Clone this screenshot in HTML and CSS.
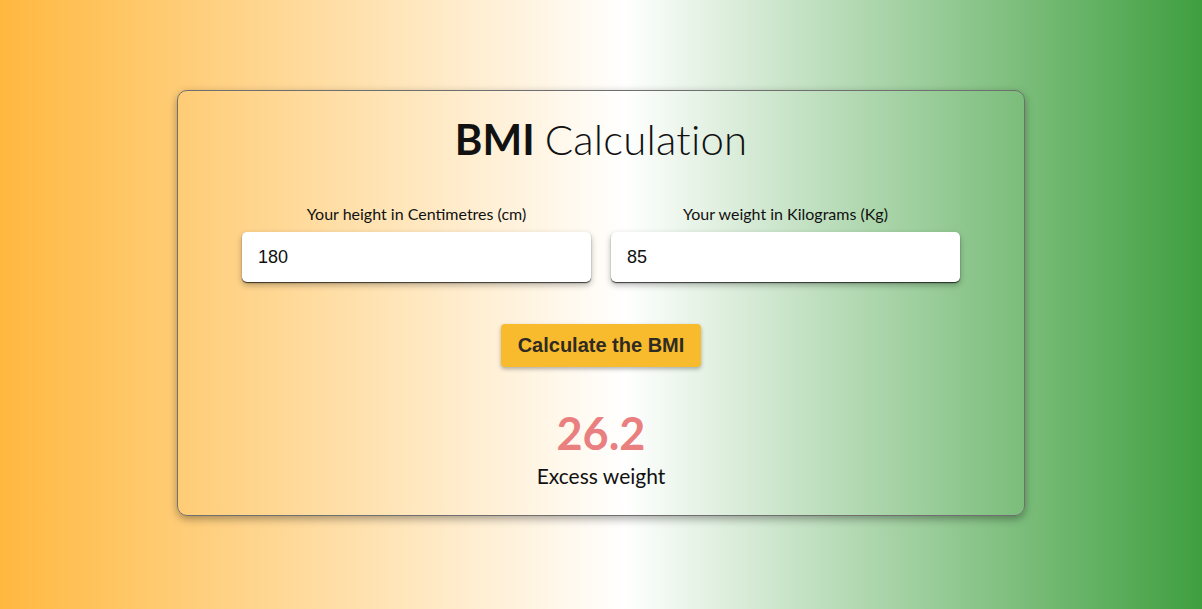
FILE: index.html
```html
<!DOCTYPE html>
<html lang="en">
<head>
<meta charset="utf-8">
<title>BMI Calculation</title>
<link rel="stylesheet" href="styles.css">
</head>
<body>
<main class="page">
  <section class="card">
    <h1 class="title"><strong>BMI</strong> Calculation</h1>
    <div class="fields">
      <label class="field">
        <span class="field-label">Your height in Centimetres (cm)</span>
        <input class="field-input" type="text" value="180">
      </label>
      <label class="field">
        <span class="field-label">Your weight in Kilograms (Kg)</span>
        <input class="field-input" type="text" value="85">
      </label>
    </div>
    <button class="calc-btn" type="button">Calculate the BMI</button>
    <div class="result">
      <div class="result-value">26.2</div>
      <div class="result-text">Excess weight</div>
    </div>
  </section>
</main>
</body>
</html>
```
FILE: styles.css
```css
* { box-sizing: border-box; }
html, body { margin: 0; padding: 0; }
body {
  height: 609px;
  background: linear-gradient(to right, #ffb83f 0%, #ffffff 52%, #3f9f3f 100%);
  font-family: Lato, "Liberation Sans", sans-serif;
  color: #111;
}
.page {
  display: flex;
  justify-content: center;
  padding-top: 90px;
}
.card {
  width: 848px;
  border: 1px solid #6f6f6f;
  border-radius: 10px;
  box-shadow: 0 3px 8px rgba(0,0,0,0.35);
  padding: 20px 64px 26px;
  display: flex;
  flex-direction: column;
  align-items: center;
}
.title {
  margin: 0;
  font-size: 42px;
  line-height: 56px;
  font-weight: 300;
  color: #111;
  letter-spacing: 0.2px;
  word-spacing: -2px;
}
.title strong { font-weight: 700; }
.fields {
  width: 100%;
  display: grid;
  grid-template-columns: 1fr 1fr;
  gap: 20px;
  margin-top: 38px;
}
.field {
  display: flex;
  flex-direction: column;
  align-items: center;
  gap: 9px;
}
.field-label {
  font-size: 16px;
  line-height: 18px;
  color: #111;
}
.field-input {
  width: 100%;
  height: 50px;
  border: none;
  border-radius: 5px;
  background: #fff;
  padding: 0 16px;
  font-family: "Liberation Sans", Arial, sans-serif;
  font-size: 18px;
  color: #111;
  box-shadow: 0 1px 1px rgba(0,0,0,0.7), 0 3px 6px rgba(0,0,0,0.3);
  outline: none;
}
.calc-btn {
  margin-top: 42px;
  width: 200px;
  height: 43px;
  border: none;
  border-radius: 4px;
  background: #f8bb2d;
  color: #2f2a22;
  font-family: "Liberation Sans", Arial, sans-serif;
  font-weight: 700;
  font-size: 20px;
  box-shadow: 0 2px 4px rgba(0,0,0,0.3);
}
.result {
  margin-top: 40px;
  display: flex;
  flex-direction: column;
  align-items: center;
}
.result-value {
  font-size: 45px;
  line-height: 52px;
  font-weight: 700;
  color: #ea7f7f;
}
.result-text {
  margin-top: 4px;
  font-size: 21px;
  line-height: 26px;
  font-weight: 400;
  color: #111;
}
```
